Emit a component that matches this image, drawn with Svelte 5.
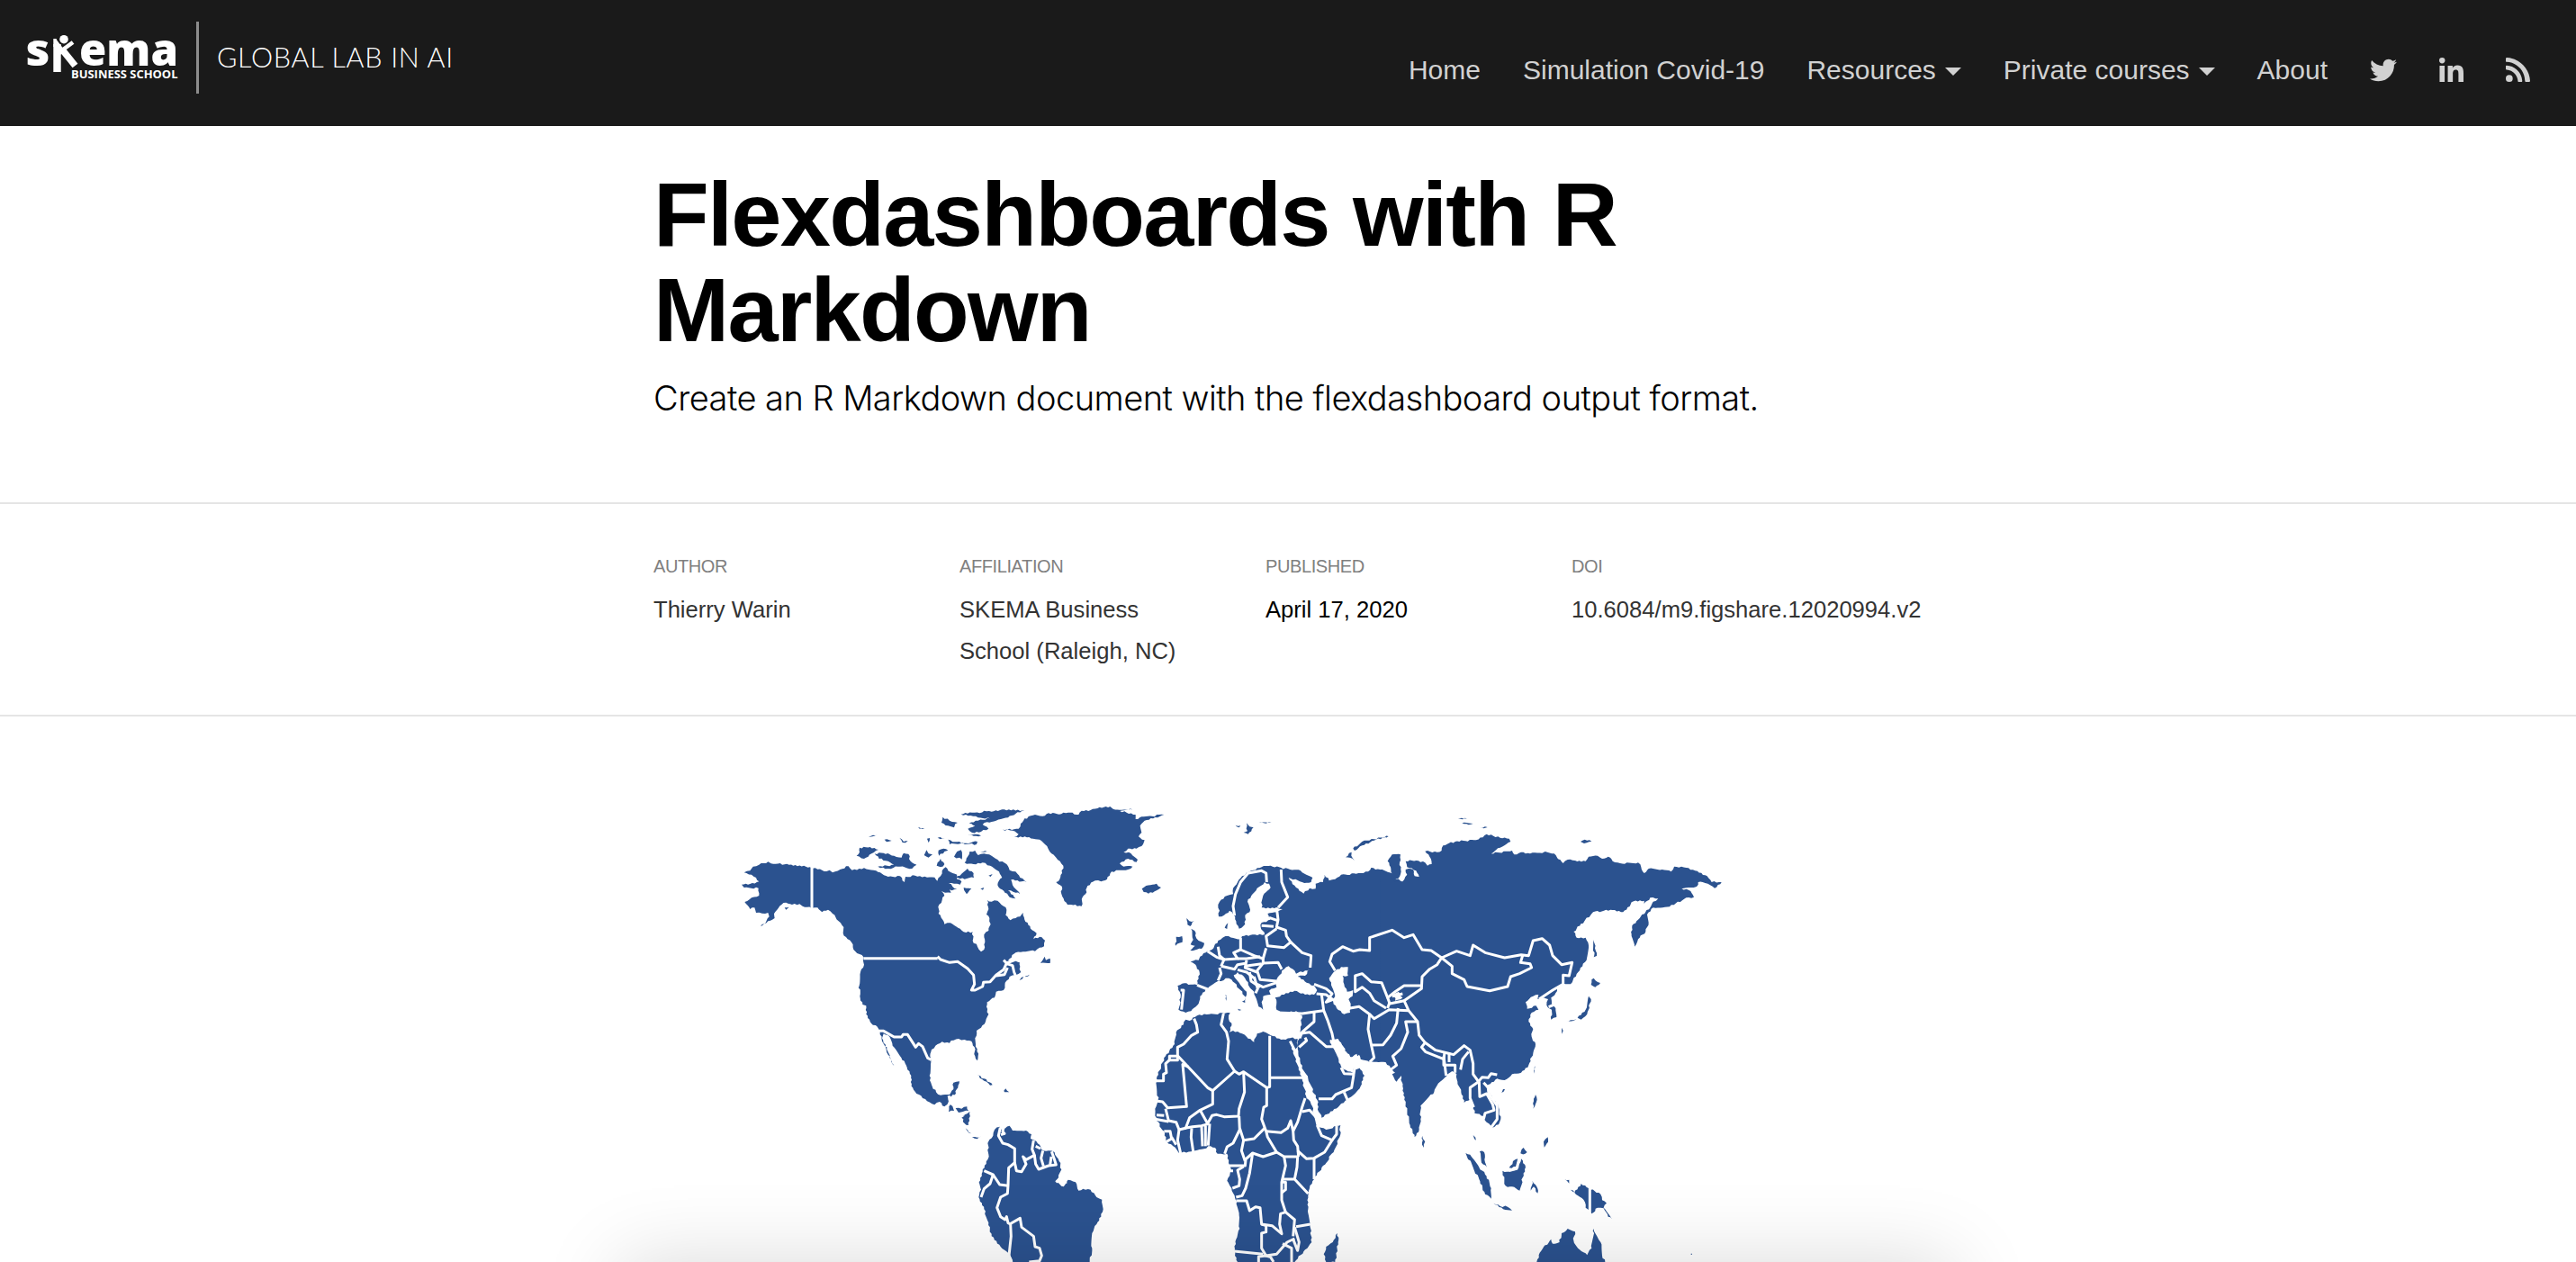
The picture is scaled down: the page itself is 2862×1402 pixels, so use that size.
<script>
  const meta = [
    { label: 'Author', lines: ['Thierry Warin'] },
    { label: 'Affiliation', lines: ['SKEMA Business', 'School (Raleigh, NC)'] },
    { label: 'Published', lines: ['April 17, 2020'], strong: true },
    { label: 'DOI', lines: ['10.6084/m9.figshare.12020994.v2'] }
  ];
  const links = [
    { text: 'Home' },
    { text: 'Simulation Covid-19' },
    { text: 'Resources', menu: true },
    { text: 'Private courses', menu: true },
    { text: 'About' }
  ];

  function coast(str) {
    const p = str.trim().split(/\s+/).map((s) => s.split(',').map(Number));
    let out = '';
    p.forEach((a, i) => {
      const b = p[(i + 1) % p.length];
      out += `${a[0]},${a[1]} `;
      const dx = b[0] - a[0];
      const dy = b[1] - a[1];
      const len = Math.hypot(dx, dy);
      const n = len > 170 ? 0 : Math.floor(len / 7);
      for (let k = 1; k < n; k++) {
        const r = Math.sin(a[0] * 12.9 + a[1] * 78.2 + k * 37.7) * 43758.5;
        const j = (r - Math.floor(r) - 0.5) * 6;
        out += `${(a[0] + (dx * k) / n - (dy / len) * j).toFixed(1)},${(a[1] + (dy * k) / n + (dx / len) * j).toFixed(1)} `;
      }
    });
    return out;
  }

  // Each sheet of the map has its own origin and is drawn at three units per pixel.
  const sheets = [
    {
      x: 800,
      land: [
        '80,268 100,262 110,248 130,242 160,232 170,238 230,242 300,250 325,257 355,264 365,260 375,268 400,258 428,247 440,260 480,253 520,262 540,272 560,282 600,280 615,300 618,282 650,278 690,284 715,284 724,296 735,280 740,262 752,250 760,262 775,270 790,275 790,290 805,298 800,308 780,305 762,303 775,315 790,322 780,325 765,325 770,335 750,335 738,330 748,345 740,360 730,375 728,405 742,425 748,440 768,436 800,455 820,468 842,466 842,495 858,515 870,532 880,525 883,500 880,475 895,462 902,440 898,420 888,408 895,390 890,360 905,365 925,362 945,380 955,392 952,410 968,427 985,420 1000,415 1010,402 1015,425 1025,435 1040,460 1055,470 1045,490 1065,482 1083,494 1080,514 1065,518 1050,530 1010,532 985,535 960,560 985,560 1000,565 998,590 1003,600 985,610 965,615 950,635 945,660 920,665 915,685 890,700 888,715 895,740 885,765 870,785 855,795 850,820 852,840 860,880 858,895 850,880 848,850 838,830 815,825 795,822 770,828 765,836 740,832 725,840 705,858 700,880 703,900 698,945 705,975 720,1000 735,1010 765,1008 778,990 778,968 798,964 793,985 780,1010 765,1015 760,1022 760,1040 748,1048 732,1032 715,1042 690,1030 670,1012 650,998 638,980 637,945 620,910 600,880 575,845 565,815 545,805 540,820 552,850 560,875 580,912 565,885 556,850 540,830 533,800 528,788 500,765 487,740 487,712 475,708 466,680 464,645 468,600 480,575 478,550 465,540 445,525 438,500 425,490 410,470 412,450 395,430 375,405 360,392 340,400 325,385 305,387 275,380 265,373 240,375 220,368 205,375 190,392 180,405 182,420 160,430 135,448 155,428 164,415 160,402 140,404 120,402 115,385 100,390 82,366 105,352 130,345 128,320 80,318 72,308 100,306 130,298 120,285 105,275',
        '803,74 840,68 865,70 880,62 905,65 940,58 1015,62 985,72 960,85 920,95 890,100 875,108 895,122 870,132 840,135 826,122 850,112 830,105 860,95 900,88 860,85 835,78',
        '742,83 765,95 792,102 784,106 780,118 760,112 738,102',
        '760,158 775,166 820,170 858,165 855,174 800,172 765,174',
        '465,185 500,183 528,192 505,205 480,222 455,212 465,200',
        '515,205 545,203 580,212 605,218 612,203 628,206 635,230 655,242 640,255 600,248 578,252 560,255 526,248 580,242 560,230 530,222',
        '688,193 695,205 708,208 695,218 680,210', '728,194 745,188 760,194 748,198 730,212', '725,235 735,222 748,240 735,250 722,245',
        '780,215 790,198 803,193 806,224',
        '825,215 832,198 850,195 860,210 880,205 905,212 925,225 955,240 965,260 985,265 1000,285 1022,300 1005,298 970,292 975,310 1000,340 985,335 960,328 985,355 965,350 940,325 925,310 930,295 940,285 930,265 900,245 875,235 845,240 815,235',
        '812,318 838,322 822,340', '785,285 805,272 825,255 845,270 846,285 815,290', '895,278 908,273 902,282', '868,322 880,318 876,326',
        '495,150 510,143 525,142 508,148', '548,158 572,162 555,166', '598,152 612,165 626,163 608,168', '660,116 682,123 665,122', '690,155 699,153 695,168', '725,152 750,153 735,157', '868,198 890,198 875,201', '825,143 845,146 870,145 850,140',
        '215,385 230,383 220,392', '1068,570 1075,560 1082,548 1086,560 1100,554 1100,570', '998,627 1005,617 1012,616', '1016,614 1032,608 1020,616',
        '855,941 880,955 908,976 900,977 880,962', '946,995 952,988 964,1000 948,1000',
        '762,1040 775,1047 780,1062 762,1066', '785,1053 805,1055 823,1048 828,1062 795,1068', '808,1078 832,1065 830,1080'
      ],
      lines: [
        '306,245 306,390', '478,554 725,554', '725,548 735,558 765,568 792,565 825,588 845,610 848,640 838,660 850,660 875,648 878,634 900,632 920,610 945,592 955,570 985,558 1003,565', '955,572 975,578 980,600 985,612', '920,612 948,608 958,585', '945,560 960,575',
        '528,796 545,796 580,816 605,816 610,808 625,808 652,850 662,838 675,848 692,886 704,892', '762,1012 768,1030 760,1045', '780,1010 772,1020'
      ]
    },
    {
      x: 1040,
      land: [
        '260,150 275,140 255,128 222,125 275,122 282,105 295,88 330,75 355,80 375,70 410,74 440,68 475,75 485,62 515,60 545,50 580,48 590,56 655,58 605,62 665,75 665,90 685,82 720,80 760,75 730,84 695,95 680,112 685,135 675,148 695,160 685,180 668,188 640,188 625,200 650,205 672,225 668,233 640,222 612,238 625,248 655,248 640,258 585,265 570,290 550,298 530,295 505,312 498,340 488,350 485,380 450,375 438,375 425,355 418,340 420,315 400,300 412,290 420,270 424,245 405,225 385,205 370,180 345,158 310,150',
        '686,322 700,312 735,305 750,318 735,328 708,338 692,333',
        '85,1085 112,1065 108,1110 95,1104', '98,1120 118,1138 105,1130', '120,1150 138,1151 150,1148 138,1156',
        '172,1170 178,1158 190,1145 195,1125 212,1115 215,1125 222,1122 245,1112 255,1128 300,1128 318,1140 315,1155 328,1160 345,1175 350,1190 375,1195 395,1200 410,1230 418,1258 408,1285 400,1300 425,1315 440,1292 465,1300 475,1328 490,1322 515,1325 535,1350 553,1358 557,1390 550,1415 535,1440 520,1470 520,1520 512,1566 255,1566 240,1535 215,1515 185,1480 175,1435 160,1390 142,1350 150,1325 143,1300 155,1265 172,1225 176,1215'
      ],
      lines: [
        '214,1118 208,1145 222,1170 240,1175 262,1188 262,1235 242,1252 240,1310 238,1338 215,1350 203,1385 215,1415 230,1425 235,1415 240,1436 248,1440', '225,1116 222,1132 228,1138 216,1142', '262,1235 268,1262 285,1265 300,1240 290,1215 300,1225 328,1210 320,1190 325,1160', '328,1210 332,1240 342,1257 375,1245 400,1242 393,1220 385,1198', '358,1247 350,1220 356,1195', '380,1242 384,1215',
        '160,1262 190,1275 180,1305 160,1322 150,1350', '190,1275 212,1308 240,1312', '245,1440 280,1420 285,1450 325,1480 330,1515 345,1520 352,1545 345,1562 310,1566', '248,1440 250,1480 243,1545 252,1566', '400,1300 415,1285 418,1300 436,1300', '348,1188 332,1180'
      ]
    },
    {
      x: 1260,
      land: [
        '172,758 185,762 210,745 250,740 300,738 320,735 315,755 325,770 318,800 330,795 360,805 375,815 400,833 410,805 430,798 455,810 490,825 520,820 545,822 545,850 535,862 522,835 530,870 545,910 560,955 575,1020 590,1040 605,1085 610,1110 622,1118 640,1125 688,1110 685,1150 665,1200 630,1245 600,1290 585,1320 580,1345 580,1390 588,1440 592,1500 570,1525 540,1560 535,1566 345,1566 335,1530 340,1490 352,1455 350,1410 342,1365 335,1345 325,1320 310,1295 320,1270 315,1235 310,1205 290,1205 278,1205 270,1185 255,1180 225,1190 190,1198 150,1203 130,1180 108,1165 100,1130 75,1095 70,1055 80,1025 75,955 90,915 105,880 135,840 140,800 165,775',
        '282,415 285,395 280,375 285,365 310,345 330,340 330,320 345,300 360,280 390,262 425,250 455,245 490,252 520,258 555,262 595,285 590,300 560,300 515,285 540,318 565,338 585,320 605,322 605,305 630,300 635,275 650,295 670,290 690,275 740,272 780,265 790,252 820,258 860,270 868,285 900,300 900,870 838,900 785,900 755,890 750,875 728,885 710,870 690,835 680,828 660,840 680,885 690,915 705,925 730,935 735,915 745,910 768,945 755,980 730,1010 710,1025 680,1050 625,1085 615,1065 610,1025 600,1005 580,955 555,905 548,880 545,855 545,830 552,820 555,790 560,745 540,730 500,735 475,725 475,700 470,685 500,675 535,662 570,675 600,675 610,660 600,645 575,635 545,615 570,612 585,590 570,595 540,605 535,595 515,580 500,590 485,610 475,625 475,650 450,662 455,675 430,680 425,700 430,725 415,715 408,690 400,665 385,650 370,620 345,600 332,610 350,635 375,665 372,683 355,660 325,625 305,620 290,630 270,635 245,655 220,680 215,705 190,730 172,735 148,725 155,685 152,665 145,645 160,638 210,643 218,600 205,575 188,565 215,560 220,548 245,530 265,520 280,495 295,485 315,480 355,490 360,480 395,475 435,475 422,450 425,435 455,425 445,405 475,400 495,390 475,385 425,385 430,345 455,318 450,305 435,300 410,320 395,340 378,365 385,385 385,400 370,410 370,440 350,455 340,430 332,410 318,395 300,410',
        '190,455 202,462 204,478 215,495 234,503 225,522 187,527 203,512 188,508 197,492', '175,420 184,430 200,430 187,447 178,442', '140,482 160,480 161,500 138,512', '302,452 313,436 310,456', '304,676 308,678 307,696',
        '338,110 355,112 350,118', '375,103 385,115 398,118 380,140 365,135 378,130', '415,100 458,100 440,104', '848,147 800,161 760,178 735,195 730,188 760,165 800,157', '725,200 724,212 735,228 718,218 705,217', '345,722 358,726 350,728', '360,698 372,685 370,702',
        '678,1470 680,1500 670,1566 640,1566 632,1540 640,1515 662,1500'
      ],
      lines: [
        '200,755 208,775 212,800 190,812 165,840 145,850 145,893 118,893 118,880 145,880', '118,893 105,905 108,935 98,940 98,962 75,962', '145,878 245,985 262,995 335,930 350,940 365,932 442,985 452,982 452,812', '180,915 162,908 175,1048 112,1052 95,1032 78,1030', '335,930 310,890 315,830 308,800 290,775 298,738', '452,952 565,952', '442,985 442,1045 432,1050 425,1090 440,1130 445,1150 475,1200 500,1215 545,1215',
        '365,935 368,1000 350,1055 348,1080 300,1082 275,1075 260,1078 245,1105 220,1060', '262,995 262,1040 220,1060 185,1085 172,1120 150,1125 140,1100 115,1095 105,1055', '170,1120 195,1115 225,1112 250,1105', '192,1120 190,1150 197,1198', '225,1115 228,1180', '238,1112 238,1180', '252,1105 247,1178', '150,1125 145,1160 155,1203', '100,1130 120,1130 125,1155 108,1165', '70,1090 115,1098', '75,1076 100,1078', '125,1150 140,1175',
        '350,1080 352,1125 330,1170 310,1182 302,1205', '352,1120 365,1160 358,1195 370,1230', '365,1160 400,1155 435,1120', '370,1225 395,1203 430,1215 475,1200', '440,1130 490,1135 512,1120 522,1095 530,1130 532,1160 545,1180 548,1215', '530,1130 545,1100 560,1050 570,1020', '560,1065 585,1060 612,1090', '610,1110 625,1145 660,1160 635,1200 600,1220 575,1222 545,1195', '660,1160 675,1140 675,1112', '600,1220 600,1290', '545,1215 543,1250 535,1290', '495,1290 535,1290 580,1338', '500,1215 505,1245 492,1300 492,1360 505,1400', '490,1300 505,1300 505,1325 492,1335',
        '315,1245 370,1245 372,1225', '330,1262 320,1262 316,1248', '365,1248 345,1260 352,1290 350,1312 328,1320', '395,1203 385,1270 372,1320 360,1345 340,1350', '340,1362 375,1362 385,1395 405,1382 420,1385 425,1440 440,1445 440,1466 425,1470 425,1520 440,1545 475,1540 510,1500 535,1488', '425,1440 460,1445 492,1472 485,1440 488,1405 505,1400 535,1425 530,1480', '495,1505 525,1520 525,1566', '535,1450 550,1500 545,1528 530,1490', '540,1448 588,1440', '333,1530 430,1540', '415,1566 415,1548 440,1545 455,1550 465,1566',
        '335,412 330,380 338,340 355,300 380,270 425,262 440,270 442,300', '490,258 492,300 512,350 480,385', '475,385 480,425 475,450 505,460 508,480 522,500 500,518 445,512 440,480 475,455', '425,445 465,448', '450,418 478,428', '355,485 355,525 400,545 430,555 440,520', '522,500 560,535 590,545 587,585', '430,555 430,570 480,568 492,590', '430,570 410,595 420,625 475,630', '280,515 285,545 300,558 290,580', '300,558 345,555 332,535 355,525', '245,530 275,550 300,558', '290,580 335,590 345,575 375,570', '345,555 375,555 420,548', '375,560 370,585 410,600', '345,592 375,600 400,620', '385,600 390,630 420,650', '410,640 430,650 475,635', '370,580 425,572', '400,615 412,655 405,670', '285,585 290,605 280,628', '210,643 245,657', '155,660 165,660 158,725',
        '475,735 560,738 630,728', '600,735 600,765 560,800 552,820', '552,805 585,800 640,848 668,848', '550,850 575,828 570,818', '600,640 640,655 660,672 640,700 665,690', '608,672 640,675 660,690', '625,675 632,728 645,760 660,805 665,830', '735,920 732,940 700,938 690,918', '615,1022 660,1022 672,1008 725,985 732,942', '700,1000 712,1028', '520,830 535,860 548,900', '605,1080 612,1110'
      ]
    },
    {
      x: 1450,
      land: [
        '250,258 290,272 285,250 275,230 290,208 318,208 315,235 320,265 310,288 285,290 300,300 325,298 340,275 335,258 345,255 360,258 365,280 380,282 370,262 340,250 335,230 370,228 400,235 408,245 422,240 415,215 400,197 440,200 455,195 460,178 500,165 570,160 605,140 650,152 680,155 685,165 650,185 620,205 690,195 697,208 720,200 750,205 790,203 800,198 830,205 860,237 875,225 900,228 935,230 945,215 975,212 990,222 1010,215 1025,230 1050,237 1110,235 1120,250 1130,270 1145,255 1190,258 1220,265 1230,248 1270,252 1300,262 1340,280 1355,300 1388,300 1365,320 1350,310 1325,300 1310,300 1305,315 1285,318 1255,322 1285,330 1296,350 1270,352 1215,382 1160,385 1140,408 1145,435 1135,465 1110,490 1098,515 1088,480 1090,445 1110,425 1150,385 1160,365 1177,355 1150,352 1130,372 1130,362 1095,364 1060,400 1025,393 960,400 895,465 905,485 935,485 945,510 938,560 910,600 885,640 860,638 840,655 835,670 820,685 822,705 835,720 838,750 820,758 822,725 805,710 810,690 795,685 775,690 778,675 760,680 735,700 740,722 770,712 778,725 755,735 745,765 760,790 755,815 768,840 760,870 745,910 720,935 690,940 665,960 640,955 610,975 605,985 625,1020 645,1050 652,1090 645,1108 625,1118 605,1100 595,1080 565,1070 560,1040 550,1025 530,1035 520,1000 508,965 505,940 490,930 475,940 450,965 430,1000 385,1045 385,1090 380,1125 365,1150 350,1110 335,1040 325,980 320,945 305,965 290,940 300,935 285,920 265,895 250,895',
        '391,1146 400,1165 396,1185 390,1175', '535,1203 550,1208 580,1250 605,1280 620,1320 620,1355 600,1340 580,1290', '582,1197 597,1200 598,1225 605,1250 588,1235', '658,1262 680,1265 712,1252 720,1222 735,1250 725,1285 715,1328 690,1315 668,1312', '680,1252 700,1225 708,1222 704,1248', '718,1204 728,1185 740,1200 728,1208', '628,1370 650,1380 675,1382 690,1394 660,1390', '752,1328 758,1295 772,1315 775,1337 762,1315', '760,1055 762,1030 768,1008 773,1025', '797,1184 795,1165 809,1150 810,1166', '762,938 764,918 767,912', '655,1002 660,990 666,990', '865,1290 880,1292 880,1304', '885,1325 898,1334 890,1330', '510,90 520,86 540,88', '523,103 560,105 545,109', '583,118 608,117 595,121', '560,1143 570,1160 564,1156', '795,1408 798,1406',
        '918,165 932,158 955,164 930,171', '962,492 966,520 972,546 962,550', '955,625 962,620 984,636 967,650 953,642', '945,680 953,690 940,740 920,758 908,752 935,725', '870,766 885,760 905,756 895,762', '855,785 860,795 856,806', '898,1335 920,1305 945,1320 985,1340 990,1360 1005,1370 995,1385 1023,1422 1010,1415 995,1387 975,1385 955,1405 945,1392 935,1385 928,1358',
        '1028,1363 1036,1362', '772,1566 782,1535 820,1490 825,1505 848,1500 855,1470 875,1455 900,1465 895,1495 915,1525 940,1543 955,1520 962,1455 985,1500 990,1545 1000,1566', '1286,1538 1290,1538 1290,1541 1286,1541'
      ],
      water: ['120,583 143,583 143,612 125,612 130,640 140,665 160,660 158,680 145,690 152,705 150,735 130,740 105,720 90,690 100,680 90,650 80,620 95,600', '295,672 312,665 325,685 300,695', '83,825 110,822 130,855 150,885 172,872 185,895 200,915 170,925 155,915 148,925 130,925 118,890 100,855 88,850'],
      lines: [
        '100,595 82,565 90,540 125,515 160,530 182,525 215,528 215,485 290,460 330,485 360,475 390,525 420,528 455,552 440,575 415,590 390,615 388,655 345,685 330,695', '385,645 330,645 300,665 275,685 255,635 220,632 190,605 167,612 167,665 190,650 215,670 230,695 270,720', '150,720 180,715 215,740 230,755 280,725 345,728', '215,740 210,790 220,840 230,885 215,900', '220,843 260,842 285,810 305,770 310,720', '275,685 282,705 330,695 345,728 375,765 380,810 400,835 435,860 475,870 495,875 530,845 550,860 560,905 560,940 578,965', '290,680 325,672', '275,720 282,700', '375,765 335,765 342,800 320,855 292,880 305,910 285,925', '400,835 388,850 402,866 462,890 465,868', '462,890 462,910 500,910 500,935', '462,880 470,945', '480,868 480,900', '545,865 525,890 518,925',
        '455,552 505,530 550,545 560,510 600,535 665,552 720,542 745,545 760,495 790,488 815,510 825,545 855,575 890,568 880,612 860,610 860,640 825,660 780,690', '455,552 490,580 490,605 530,625 540,648 615,662 675,648 685,615 715,605 755,585 750,572 718,568 725,545', '812,716 838,705',
        '578,965 550,985 550,1020 562,1050', '578,965 590,950 610,952 620,938 640,942', '580,965 582,1015 605,1005 625,1040 630,1060 600,1070 595,1090', '595,968 610,985 612,1005 640,1045 640,1090 620,1118', '949,1310 949,1412', '680,1262 705,1255 715,1215 740,1210'
      ]
    }
  ];
</script>

<div class="page">
  <header>
    <div class="brand">
      <svg class="logo" width="172" height="70" viewBox="0 0 172 70">
        <text class="mark" x="0.500" y="50.500" textLength="27" lengthAdjust="spacingAndGlyphs">s</text>
        <g class="figure">
          <rect x="31.300" y="27" width="8.400" height="31" />
          <circle cx="43" cy="21.700" r="4.800" />
          <line x1="33" y1="21" x2="33" y2="30" stroke-width="3.400" />
          <line x1="33" y1="22.500" x2="41" y2="33" stroke-width="3.400" />
          <line x1="53" y1="25" x2="38" y2="36" stroke-width="4.600" />
          <line x1="39" y1="32" x2="41" y2="38" stroke-width="7" />
          <line x1="41" y1="33" x2="55.500" y2="51" stroke-width="7.500" />
        </g>
        <text class="mark" x="60" y="50.500" textLength="110" lengthAdjust="spacingAndGlyphs">ema</text>
        <text class="school" x="51" y="64.700" textLength="118.500" lengthAdjust="spacingAndGlyphs">BUSINESS SCHOOL</text>
      </svg>
      <span class="rule"></span>
      <span class="lab">GLOBAL LAB IN AI</span>
    </div>
    <nav>
      {#each links as l}
        <a>{l.text}{#if l.menu}<i class="caret"></i>{/if}</a>
      {/each}
      <svg width="30" height="30" viewBox="0 0 512 512"><path d="M459.400 151.700c.3 4.500.3 9.100.3 13.600 0 138.700-105.600 298.600-298.600 298.600-59.500 0-114.700-17.200-161.100-47.100 8.400 1 16.600 1.300 25.300 1.300 49.100 0 94.200-16.600 130.300-44.800-46.100-1-84.800-31.200-98.100-72.800 6.500 1 13 1.600 19.800 1.600 9.400 0 18.800-1.300 27.600-3.600-48.100-9.700-84.100-52-84.100-103v-1.300c14 7.800 30.200 12.700 47.400 13.300-28.300-18.800-46.800-51-46.800-87.400 0-19.500 5.200-37.400 14.300-53 51.700 63.700 129.300 105.300 216.400 109.800-1.600-7.800-2.600-15.900-2.600-24 0-57.800 46.800-104.900 104.900-104.900 30.200 0 57.500 12.700 76.700 33.100 23.700-4.500 46.500-13.300 66.600-25.300-7.800 24.400-24.400 44.800-46.100 57.800 21.100-2.300 41.600-8.100 60.400-16.200-14.300 20.800-32.200 39.300-52.600 54.300z" /></svg>
      <svg width="27" height="29" viewBox="0 0 448 480"><path d="M100.300 448H7.400V148.900h92.900zM53.800 108.100C24.100 108.100 0 83.500 0 53.800a53.800 53.800 0 0 1 107.600 0c0 29.700-24.100 54.300-53.800 54.300zM447.900 448h-92.700V302.400c0-34.700-.7-79.200-48.300-79.200-48.300 0-55.700 37.700-55.700 76.700V448h-92.800V148.900h89.100v40.800h1.300c12.400-23.500 42.700-48.300 87.900-48.300 94 0 111.300 61.900 111.300 142.300V448z" /></svg>
      <svg width="27" height="29" viewBox="0 0 448 480"><path d="M128 384a64 64 0 1 1-128 0 64 64 0 0 1 128 0zm175.700 47.300C295.200 276.500 171.400 152.800 16.700 144.300 7.600 143.800 0 151.100 0 160.200v48.100c0 8.400 6.500 15.500 14.900 16 111.800 7.300 201.500 96.700 208.800 208.800.5 8.400 7.600 14.900 16 14.900h48.100c9.100 0 16.400-7.600 15.900-16.700zm144.300.3C439.600 202.200 254.300 16.500 24.400 0 15.300-.3 0 7.200 0 16v48.100c0 8.600 6.800 15.600 15.500 16 183.200 7.500 329.400 153.600 336.900 336.900.4 8.700 7.400 31 16 31H432c9 0 16.300-7.500 16-16.400z" /></svg>
    </nav>
  </header>

  <section class="title">
    <h1>Flexdashboards with R<br />Markdown</h1>
    <p>Create an R Markdown document with the flexdashboard output format.</p>
  </section>

  <section class="meta">
    {#each meta as m}
      <div>
        <h3>{m.label}</h3>
        {#each m.lines as line}<p class:strong={m.strong}>{line}</p>{/each}
      </div>
    {/each}
  </section>

  <svg class="map" viewBox="800 880 1140 522" width="1140" height="522">
    {#each sheets as s}
      <g transform="translate({s.x} 880) scale(0.333333)">
        {#each s.land as l}<polygon class="land" points={coast(l)} />{/each}
      </g>
    {/each}
    {#each sheets as s}
      <g transform="translate({s.x} 880) scale(0.333333)">
        {#each s.water || [] as w}<polygon class="water" points={coast(w)} />{/each}
        {#each s.lines as l}<polyline points={l} />{/each}
      </g>
    {/each}
  </svg>
  <div class="shade"></div>
</div>

<style>
  :global(body) { background: #fff; }
  .page { position: relative; height: 1402px; overflow: hidden; font-family: 'Liberation Sans', Arial, sans-serif; color: #000; }
  header { height: 140px; box-sizing: border-box; background: #1a1a1a; display: flex; justify-content: space-between; padding: 0 51px 0 28px; }
  .brand { display: flex; align-items: flex-start; padding-top: 24px; }
  .logo { margin-top: -2px; fill: #fff; overflow: visible; }
  .mark { font: 800 50px 'Open Sans', sans-serif; }
  .school { font: 700 11.500px 'Open Sans', sans-serif; }
  .figure line { stroke: #fff; }
  .rule { width: 3px; height: 80px; margin-left: 18px; background: #8d8d8d; }
  .lab { margin: 19px 0 0 20px; font: 300 30.500px/40px Lato, sans-serif; letter-spacing: 0.7px; color: #fff; white-space: nowrap; }
  nav { display: flex; align-items: center; gap: 47px; padding-top: 16px; color: #d1d1d1; font-size: 30px; }
  nav a { display: flex; align-items: center; white-space: nowrap; }
  nav svg { fill: #d1d1d1; }
  .caret { margin: 3px 0 0 10px; border: 9px solid transparent; border-top-color: #d1d1d1; border-bottom: 0; }
  .title { height: 418px; box-sizing: border-box; padding: 45px 0 0 726px; }
  h1 { margin: 0 0 15px; font-size: 101px; line-height: 106px; letter-spacing: -1.700px; }
  .title p { margin: 0; font: 300 38px/60px Inter, sans-serif; letter-spacing: -0.520px; white-space: nowrap; }
  .meta { display: grid; grid-template-columns: repeat(4, 340px); height: 238px; box-sizing: border-box; padding: 53px 0 0 726px; border-top: 2px solid #e5e5e5; border-bottom: 2px solid #e5e5e5; }
  h3 { margin: 0 0 9px; font-size: 20px; line-height: 32px; letter-spacing: -0.400px; font-weight: 400; text-transform: uppercase; color: #808080; }
  .meta p { margin: 0; font-size: 25.600px; line-height: 46px; color: #333; white-space: nowrap; }
  .meta p.strong { color: #000; }
  .map { display: block; margin: 84px 0 0 800px; }
  .land { fill: #2b528f; }
  .water { fill: #fff; }
  polyline { fill: none; stroke: #fff; stroke-width: 9; stroke-linejoin: round; }
  .shade { position: absolute; left: 690px; top: 1402px; width: 1480px; height: 300px; box-shadow: 0 0 84px rgba(0, 0, 0, 0.15); }
</style>
